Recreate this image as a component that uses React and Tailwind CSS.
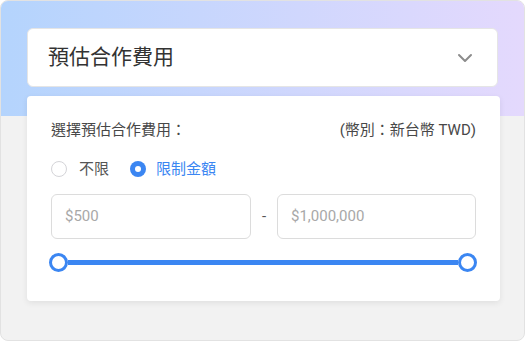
import { ChevronDown } from 'lucide-react'

const FONT = "Roboto, 'Noto Sans CJK TC', sans-serif"

function Radio({ checked, label }) {
  return (
    <label className={`flex items-center ${checked ? 'gap-[10px]' : 'gap-3'}`}>
      {checked ? (
        <span className="w-4 h-4 rounded-full bg-[#3b86f2] flex items-center justify-center">
          <span className="w-[6px] h-[6px] rounded-full bg-white" />
        </span>
      ) : (
        <span className="w-4 h-4 rounded-full border border-[#d4d4d8] bg-white" />
      )}
      <span className={`text-[15px] ${checked ? 'text-[#3b86f2]' : 'text-[#555]'}`}>{label}</span>
    </label>
  )
}

export default function App() {
  return (
    <div
      className="relative w-[525px] h-[341px] rounded-lg border border-[#e2e2e2] bg-[#f2f2f2] overflow-hidden"
      style={{ fontFamily: FONT }}
    >
      {/* gradient band behind the cards */}
      <div className="absolute left-0 top-0 w-full h-[115px] bg-gradient-to-r from-[#b4d4fd] to-[#e4d9fd]" />

      <div className="relative pt-[27px] pl-[26px]">
        <div className="w-[471px] h-[59px] rounded-md bg-white border border-[#e5e5e5] flex items-center justify-between pl-[20px] pr-[20px]">
          <span className="text-[21px] text-[#333]">預估合作費用</span>
          <ChevronDown className="w-[24px] h-[24px] text-[#8c8c8c]" strokeWidth={2} />
        </div>

        <div className="mt-[9px] w-[473px] h-[205px] rounded bg-white shadow-[0_2px_6px_rgba(0,0,0,0.08)] pl-[24px] pr-[24px] pt-[24px]">
          <div className="flex items-center justify-between text-[15px] text-[#484848] leading-5">
            <span>選擇預估合作費用：</span>
            <span>(幣別：新台幣 TWD)</span>
          </div>

          <div className="mt-[19px] flex items-center gap-[21px] leading-5">
            <Radio label="不限" />
            <Radio checked label="限制金額" />
          </div>

          <div className="mt-[15px] flex items-center">
            <div className="w-[200px] h-[45px] rounded-md border border-[#dcdcdc] flex items-center px-[13px] text-[15px] text-[#a8a8a8]">
              $500
            </div>
            <span className="flex-1 text-center text-[15px] text-[#555]">-</span>
            <div className="w-[199px] h-[45px] rounded-md border border-[#dcdcdc] flex items-center px-[13px] text-[15px] text-[#a8a8a8]">
              $1,000,000
            </div>
          </div>

          <div className="mt-[14px] -ml-[2px] w-[428px] h-[19px] flex items-center">
            <span className="w-[19px] h-[19px] shrink-0 rounded-full border-[3px] border-[#3b86f2] bg-white" />
            <span className="flex-1 h-[5px] bg-[#3b86f2]" />
            <span className="w-[19px] h-[19px] shrink-0 rounded-full border-[3px] border-[#3b86f2] bg-white" />
          </div>
        </div>
      </div>
    </div>
  )
}
